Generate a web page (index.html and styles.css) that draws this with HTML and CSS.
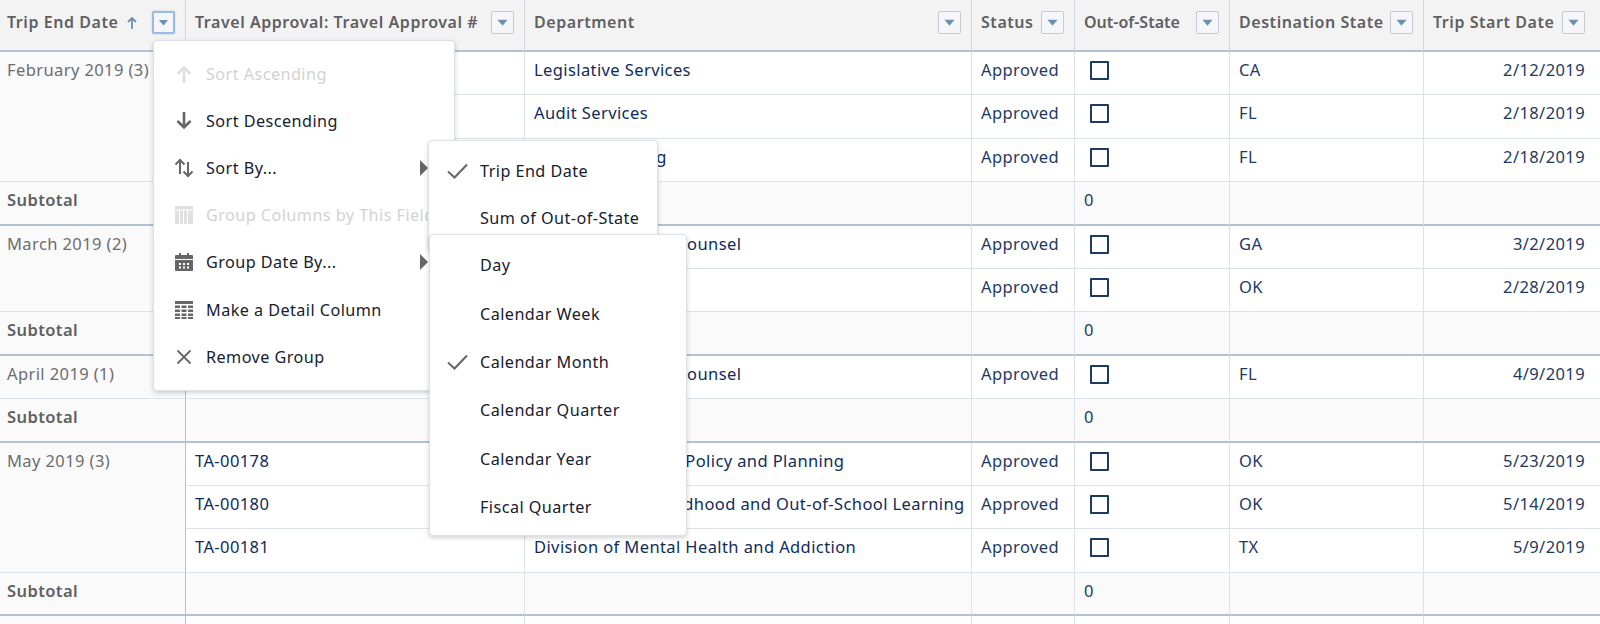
FILE: index.html
```html
<!DOCTYPE html>
<html lang="en">
<head>
<meta charset="utf-8">
<title>Trip report</title>
<link rel="stylesheet" href="styles.css">
</head>
<body>
<svg class="defs" width="0" height="0" aria-hidden="true">
  <symbol id="filter" viewBox="0 0 23 23"><path d="M6 8.500h11l-5.500 6.500z"/></symbol>
</svg>
<div class="report">
<table class="grid">
  <colgroup>
    <col class="c1"><col class="c2"><col class="c3"><col class="c4"><col class="c5"><col class="c6"><col class="c7">
  </colgroup>
  <thead>
    <tr>
      <th><div class="head"><span class="label">Trip End Date</span><svg class="sort" viewBox="0 0 12 14"><path d="M6 13V2M2 6l4-4 4 4"/></svg><span class="fbtn active"><svg viewBox="0 0 23 23"><use href="#filter"/></svg></span></div></th>
      <th><div class="head"><span class="label">Travel Approval: Travel Approval #</span><span class="fbtn"><svg viewBox="0 0 23 23"><use href="#filter"/></svg></span></div></th>
      <th><div class="head"><span class="label">Department</span><span class="fbtn"><svg viewBox="0 0 23 23"><use href="#filter"/></svg></span></div></th>
      <th><div class="head"><span class="label">Status</span><span class="fbtn"><svg viewBox="0 0 23 23"><use href="#filter"/></svg></span></div></th>
      <th><div class="head"><span class="label tight">Out-of-State</span><span class="fbtn"><svg viewBox="0 0 23 23"><use href="#filter"/></svg></span></div></th>
      <th><div class="head"><span class="label">Destination State</span><span class="fbtn"><svg viewBox="0 0 23 23"><use href="#filter"/></svg></span></div></th>
      <th><div class="head"><span class="label">Trip Start Date</span><span class="fbtn"><svg viewBox="0 0 23 23"><use href="#filter"/></svg></span></div></th>
    </tr>
  </thead>
  <tbody>
    <tr><td class="group" rowspan="3">February 2019 (3)</td><td></td><td class="link">Legislative Services</td><td>Approved</td><td><span class="box"></span></td><td>CA</td><td class="num">2/12/2019</td></tr>
    <tr><td></td><td class="link">Audit Services</td><td>Approved</td><td><span class="box"></span></td><td>FL</td><td class="num">2/18/2019</td></tr>
    <tr><td></td><td class="link">Capital Planning</td><td>Approved</td><td><span class="box"></span></td><td>FL</td><td class="num">2/18/2019</td></tr>
    <tr class="sub"><td class="group">Subtotal</td><td></td><td></td><td></td><td>0</td><td></td><td></td></tr>
    <tr><td class="group" rowspan="2">March 2019 (2)</td><td></td><td class="link">Office of General Counsel</td><td>Approved</td><td><span class="box"></span></td><td>GA</td><td class="num">3/2/2019</td></tr>
    <tr><td></td><td></td><td>Approved</td><td><span class="box"></span></td><td>OK</td><td class="num">2/28/2019</td></tr>
    <tr class="sub"><td class="group">Subtotal</td><td></td><td></td><td></td><td>0</td><td></td><td></td></tr>
    <tr><td class="group">April 2019 (1)</td><td></td><td class="link">Office of General Counsel</td><td>Approved</td><td><span class="box"></span></td><td>FL</td><td class="num">4/9/2019</td></tr>
    <tr class="sub"><td class="group">Subtotal</td><td></td><td></td><td></td><td>0</td><td></td><td></td></tr>
    <tr><td class="group" rowspan="3">May 2019 (3)</td><td class="link">TA-00178</td><td class="link">Office of Educator Policy and Planning</td><td>Approved</td><td><span class="box"></span></td><td>OK</td><td class="num">5/23/2019</td></tr>
    <tr><td class="link">TA-00180</td><td class="link">Office of Early Childhood and Out-of-School Learning</td><td>Approved</td><td><span class="box"></span></td><td>OK</td><td class="num">5/14/2019</td></tr>
    <tr><td class="link">TA-00181</td><td class="link">Division of Mental Health and Addiction</td><td>Approved</td><td><span class="box"></span></td><td>TX</td><td class="num">5/9/2019</td></tr>
    <tr class="sub"><td class="group">Subtotal</td><td></td><td></td><td></td><td>0</td><td></td><td></td></tr>
    <tr><td class="group"></td><td></td><td></td><td></td><td></td><td></td><td></td></tr>
  </tbody>
</table>

<div class="menu main-menu">
  <div class="item off"><svg class="ico" viewBox="0 0 20 20"><path class="st" d="M10 19V4M3.500 10 10 3.500l6.500 6.500"/></svg>Sort Ascending</div>
  <div class="item"><svg class="ico" viewBox="0 0 20 20"><path class="st" d="M10 1v15M3.500 10 10 16.500 16.500 10"/></svg>Sort Descending</div>
  <div class="item"><svg class="ico" viewBox="0 0 20 20"><path class="st thin" d="M6 16V2M1.500 6.500 6 2l4.500 4.500M14 4v14M9.500 13.500 14 18l4.500-4.500"/></svg>Sort By...<i class="more"></i></div>
  <div class="item off"><svg class="ico" viewBox="0 0 20 20"><path class="fl" d="M1 1h18v3.500H1zM1 5.500h4V19H1zM6 5.500h3V19H6zM10 5.500h3V19h-3zM14 5.500h5V19h-5z"/></svg>Group Columns by This Field</div>
  <div class="item"><svg class="ico" viewBox="0 0 20 20"><path class="fl" fill-rule="evenodd" d="M5 1h2v2h6V1h2v2h3a1 1 0 0 1 1 1v3H1V4a1 1 0 0 1 1-1h3zM1 8h18v10a1 1 0 0 1-1 1H2a1 1 0 0 1-1-1zM5 11v2h2v-2zM9 11v2h2v-2zM13 11v2h2v-2zM5 14.500v2h2v-2zM9 14.500v2h2v-2zM13 14.500v2h2v-2z"/></svg>Group Date By...<i class="more"></i></div>
  <div class="item"><svg class="ico" viewBox="0 0 20 20"><path class="fl" d="M1 1h18v3H1zM1 5.500h5v2.500H1zM7.500 5.500h5v2.500h-5zM14 5.500h5v2.500h-5zM1 9.500h5V12H1zM7.500 9.500h5V12h-5zM14 9.500h5V12h-5zM1 13.500h5V16H1zM7.500 13.500h5V16h-5zM14 13.500h5V16h-5zM1 17h5v2H1zM7.500 17h5v2h-5zM14 17h5v2h-5z"/></svg>Make a Detail Column</div>
  <div class="item"><svg class="ico" viewBox="0 0 20 20"><path class="st x" d="M3.500 3.500l13 13M16.500 3.500l-13 13"/></svg>Remove Group</div>
</div>

<div class="menu sort-menu">
  <div class="item sel"><svg class="check" viewBox="0 0 22 16"><path d="M1.500 8.500 8 14.500 20.500 1.500"/></svg>Trip End Date</div>
  <div class="item sel"><span class="check"></span>Sum of Out-of-State</div>
</div>

<div class="menu date-menu">
  <div class="item sel"><span class="check"></span>Day</div>
  <div class="item sel"><span class="check"></span>Calendar Week</div>
  <div class="item sel"><svg class="check" viewBox="0 0 22 16"><path d="M1.500 8.500 8 14.500 20.500 1.500"/></svg>Calendar Month</div>
  <div class="item sel"><span class="check"></span>Calendar Quarter</div>
  <div class="item sel"><span class="check"></span>Calendar Year</div>
  <div class="item sel"><span class="check"></span>Fiscal Quarter</div>
</div>
</div>
</body>
</html>
```
FILE: styles.css
```css
* { box-sizing: border-box; }
html, body { margin: 0; height: 100%; overflow: hidden; background: #fff; }
body { font-family: "Noto Sans", "Open Sans", "Liberation Sans", sans-serif; font-size: 16.500px; letter-spacing: .4px; color: #16325c; }
.defs { position: absolute; }
.report { position: relative; height: 624px; overflow: hidden; }

.grid { width: 1600px; table-layout: fixed; border-collapse: separate; border-spacing: 0; }
.c1 { width: 186px; } .c2 { width: 339px; } .c3 { width: 447px; } .c4 { width: 103px; }
.c5 { width: 155px; } .c6 { width: 194px; } .c7 { width: 176px; }

th { height: 52px; padding: 0; vertical-align: top; background: #f3f3f3; border-right: 1px solid #cfd7e0; border-bottom: 2px solid #b4c1cf; font-weight: 600; font-size: 16px; letter-spacing: .55px; text-align: left; color: #5f6062; }
th:first-child .head { padding-left: 7px; }
th:last-child, td:last-child { border-right: 0; }
.head { display: flex; align-items: center; height: 45px; padding: 0 10px 0 9px; }
th:last-child .head { padding-right: 15px; }
.label { white-space: nowrap; flex: none; margin-bottom: 2px; }
.label.tight { letter-spacing: 0; }
.sort { width: 12px; height: 14px; margin-left: 8px; fill: none; stroke: #6f8fb0; stroke-width: 1.800; flex: none; }
.fbtn { width: 23px; height: 23px; margin-left: auto; flex: none; border: 1px solid #c3ccd6; border-radius: 2px; background: #f4f6f9; display: block; }
.fbtn svg { display: block; width: 21px; height: 21px; fill: #6f8fb0; }
.fbtn.active { border: 2px solid #9bbce0; box-shadow: 0 0 2px #a8c4e6; }
.fbtn.active svg { width: 19px; height: 19px; }

td { height: 43.400px; padding: 8px 10px 0 9px; vertical-align: top; line-height: 20px; background: #fff; border-right: 1px solid #dde2e8; border-bottom: 1px solid #dde2e8; white-space: nowrap; overflow: hidden; color: #1c3a62; }
td.num { text-align: right; padding-right: 15px; }
.link { color: #0f2b5c; }
td.group { padding-left: 7px; background: #fafafa; color: #6c6d70; border-right: 1px solid #b4c1cf; }
.sub td { background: #fafafa; border-bottom: 2px solid #b4c1cf; }
.sub td.group { font-weight: 600; color: #5f6062; }
.box { display: block; width: 19px; height: 19px; margin: 1px 0 0 6px; border: 2px solid #1c3a62; border-radius: 1px; }

.menu { position: absolute; background: #fff; border: 1px solid #dde0e4; border-radius: 4px; box-shadow: 0 2px 5px rgba(0, 0, 0, .18); color: #16202e; font-size: 16.200px; letter-spacing: .45px; }
.main-menu { left: 153px; top: 40px; width: 302px; height: 351px; padding: 9px 0; }
.sort-menu { left: 428px; top: 140px; width: 230px; height: 110px; padding: 6px 0; }
.date-menu { left: 429px; top: 234px; width: 258px; height: 302px; padding: 6px 0 5px; }
.item { display: flex; align-items: center; height: 47.200px; padding: 0 26px 0 20px; white-space: nowrap; }
.date-menu .item { height: 48.400px; }
.sort-menu .item { height: 47px; }
.item.off { color: #d2d2d2; }
.ico { width: 20px; height: 20px; margin-right: 12px; flex: none; }
.st { fill: none; stroke: #666; stroke-width: 2.600; }
.st.thin { stroke-width: 2; }
.st.x { stroke-width: 1.800; }
.fl { fill: #666; }
.off .st { stroke: #e0e0e0; }
.off .fl { fill: #e0e0e0; }
.more { margin-left: auto; width: 0; height: 0; border-left: 8px solid #666; border-top: 8px solid transparent; border-bottom: 8px solid transparent; }
.item.sel { padding-left: 17px; }
.date-menu .item.sel { padding-left: 16px; }
.check { display: block; width: 23px; height: 16px; margin-right: 11px; flex: none; fill: none; stroke: #666; stroke-width: 2; }
```
